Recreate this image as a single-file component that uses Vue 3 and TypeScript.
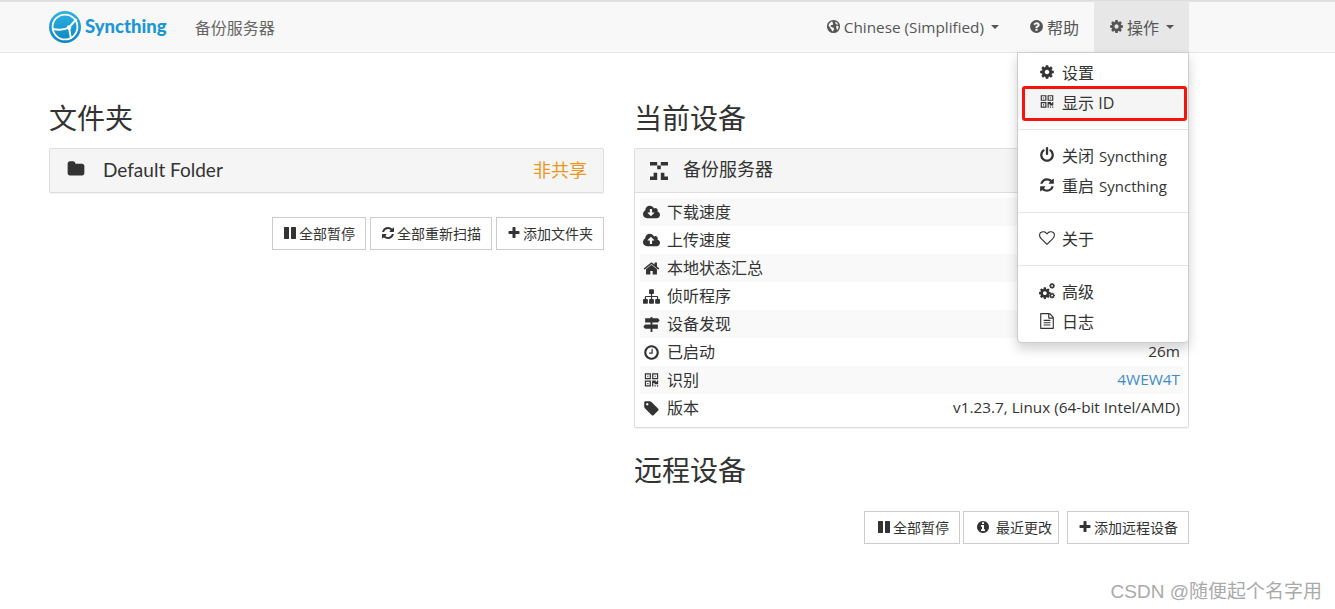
<template>
  <div class="page">
    <nav class="navbar">
      <div class="brand">
        <svg class="logo" viewBox="0 0 32 32">
          <defs>
            <linearGradient id="logoGrad" x1="0" y1="0" x2="0" y2="1">
              <stop offset="0" stop-color="#2eb3e0" />
              <stop offset="1" stop-color="#0d85c4" />
            </linearGradient>
          </defs>
          <circle cx="16" cy="16" r="16" fill="url(#logoGrad)" />
          <circle cx="16" cy="16" r="12.4" fill="none" stroke="#fff" stroke-width="1.8" />
          <path d="M4 18 Q13 20 20 16.500 L27.500 8 M20 16.500 L22 28" fill="none" stroke="#fff" stroke-width="1.9" />
          <circle cx="20" cy="16.500" r="2.300" fill="#fff" />
        </svg>
        <span class="brand-name">Syncthing</span>
      </div>
      <span class="device-name">备份服务器</span>
      <div class="nav-right">
        <a class="nav-item">
          <svg class="fa" viewBox="0 0 16 16"><path :d="globe" fill-rule="evenodd" /></svg>
          <span class="latin">Chinese (Simplified)</span>
          <i class="caret"></i>
        </a>
        <a class="nav-item">
          <svg class="fa" viewBox="0 0 1792 1792"><path :d="icons.help" /></svg>
          帮助
        </a>
        <a class="nav-item open">
          <svg class="fa" viewBox="0 0 1792 1792"><path :d="icons.cog" /></svg>
          操作
          <i class="caret"></i>
        </a>
      </div>
    </nav>

    <main class="columns">
      <section class="col">
        <h1>文件夹</h1>
        <div class="panel folder">
          <svg class="fa folder-icon" viewBox="0 0 1792 1792"><path :d="icons.folder" /></svg>
          <span class="folder-name">Default Folder</span>
          <span class="unshared">非共享</span>
        </div>
        <div class="actions first">
          <button v-for="b in folderButtons" :key="b.label" class="btn">
            <svg class="fa" viewBox="0 0 1792 1792"><path :d="b.icon" /></svg>{{ b.label }}
          </button>
        </div>
      </section>

      <section class="col">
        <h1>当前设备</h1>
        <div class="panel device">
          <div class="device-head">
            <svg class="identicon" viewBox="0 0 5 5">
              <path d="M0 0h2v1H0zM3 0h2v1H3zM2 1h1v1H2zM1 3h1v1H1zM3 3h1v1H3zM0 4h2v1H0zM3 4h2v1H3z" />
            </svg>
            <span class="device-title">备份服务器</span>
          </div>
          <div class="device-body">
            <div v-for="row in deviceRows" :key="row.label" class="row">
              <svg class="fa row-icon" :viewBox="row.box ?? '0 0 1792 1792'"><path :d="row.icon" /></svg>
              <span class="row-label">{{ row.label }}</span>
              <span class="row-value" :class="{ link: row.link }">{{ row.value }}</span>
            </div>
          </div>
        </div>
        <h1 class="remote">远程设备</h1>
        <div class="actions">
          <button class="btn pause-all">
            <svg class="fa" viewBox="0 0 1792 1792"><path :d="icons.pause" /></svg>全部暂停
          </button>
          <button class="btn recent">
            <svg class="fa" viewBox="0 0 1792 1792"><path :d="icons.info" /></svg>最近更改
          </button>
          <button class="btn">
            <svg class="fa" viewBox="0 0 1792 1792"><path :d="icons.plus" /></svg>添加远程设备
          </button>
        </div>
      </section>
    </main>

    <ul class="menu">
      <template v-for="(group, i) in menuGroups" :key="i">
        <li v-if="i > 0" class="divider"></li>
        <li v-for="item in group" :key="item.label" class="menu-item" :class="{ hover: item.hover }">
          <svg class="fa menu-icon" viewBox="0 0 1792 1792">
            <template v-if="item.cogs">
              <path :d="icons.cog" transform="translate(-109 378) scale(.85)" />
              <path :d="icons.cog" transform="translate(1090 -54) scale(.42)" />
              <path :d="icons.cog" transform="translate(1090 1030) scale(.42)" />
            </template>
            <path v-else :d="item.icon" />
          </svg>
          <span>{{ item.label }}<span v-if="item.latin" class="menu-latin">{{ item.latin }}</span></span>
        </li>
      </template>
    </ul>
    <div class="highlight"></div>

    <div class="watermark">CSDN @随便起个名字用</div>
  </div>
</template>

<script setup lang="ts">
const icons = {
  cog: 'M1152 896q0-106-75-181t-181-75-181 75-75 181 75 181 181 75 181-75 75-181zm512-109v222q0 12-8 23t-20 13l-185 28q-19 54-39 91 35 50 107 138 10 12 10 25t-9 23q-27 37-99 108t-94 71q-12 0-26-9l-138-108q-44 23-91 38-16 136-29 186-7 28-36 28h-222q-14 0-24.500-8.500t-11.500-21.500l-28-184q-49-16-90-37l-141 107q-10 9-25 9-14 0-25-11-126-114-165-168-7-10-7-23 0-12 8-23 15-21 51-66.500t54-70.500q-27-50-41-99l-183-27q-13-2-21-12.500t-8-23.500v-222q0-12 8-23t19-13l186-28q14-46 39-92-40-57-107-138-10-12-10-24 0-10 9-23 26-36 98.500-107.500t94.500-71.500q13 0 26 10l138 107q44-23 91-38 16-136 29-186 7-28 36-28h222q14 0 24.500 8.500t11.500 21.500l28 184q49 16 90 37l142-107q9-9 24-9 13 0 25 10 129 119 165 170 7 8 7 22 0 12-8 23-15 21-51 66.500t-54 70.500q26 50 41 98l183 28q13 2 21 12.500t8 23.500z',
  refresh: 'M1639 1056q0 5-1 7-64 268-268 434.500t-478 166.500q-146 0-282.500-55t-243.500-157l-129 129q-19 19-45 19t-45-19-19-45v-448q0-26 19-45t45-19h448q26 0 45 19t19 45-19 45l-137 137q71 66 161 102t187 36q134 0 250-65t186-179q11-17 53-117 8-23 30-23h192q13 0 22.500 9.500t9.500 22.500zm25-800v448q0 26-19 45t-45 19h-448q-26 0-45-19t-19-45 19-45l138-138q-148-137-349-137-134 0-250 65t-186 179q-11 17-53 117-8 23-30 23h-199q-13 0-22.500-9.500t-9.500-22.500v-7q65-268 270-434.500t480-166.500q146 0 284 55.500t245 156.500l130-129q19-19 45-19t45 19 19 45z',
  plus: 'M1600 736v192q0 40-28 68t-68 28h-416v416q0 40-28 68t-68 28h-192q-40 0-68-28t-28-68v-416h-416q-40 0-68-28t-28-68v-192q0-40 28-68t68-28h416v-416q0-40 28-68t68-28h192q40 0 68 28t28 68v416h416q40 0 68 28t28 68z',
  pause: 'M1664 192v1408q0 26-19 45t-45 19h-512q-26 0-45-19t-19-45v-1408q0-26 19-45t45-19h512q26 0 45 19t19 45zm-896 0v1408q0 26-19 45t-45 19h-512q-26 0-45-19t-19-45v-1408q0-26 19-45t45-19h512q26 0 45 19t19 45z',
  folder: 'M1728 608v704q0 92-66 158t-158 66h-1216q-92 0-158-66t-66-158v-960q0-92 66-158t158-66h320q92 0 158 66t66 158v32h672q92 0 158 66t66 158z',
  info: 'M1152 1376v-160q0-14-9-23t-23-9h-96v-512q0-14-9-23t-23-9h-320q-14 0-23 9t-9 23v160q0 14 9 23t23 9h96v320h-96q-14 0-23 9t-9 23v160q0 14 9 23t23 9h448q14 0 23-9t9-23zm-128-896v-160q0-14-9-23t-23-9h-192q-14 0-23 9t-9 23v160q0 14 9 23t23 9h192q14 0 23-9t9-23zm640 416q0 209-103 385.500t-279.500 279.500-385.500 103-385.500-103-279.500-279.500-103-385.500 103-385.500 279.500-279.500 385.500-103 385.500 103 279.500 279.500 103 385.500z',
  help: 'M1024 1376v-192q0-14-9-23t-23-9h-192q-14 0-23 9t-9 23v192q0 14 9 23t23 9h192q14 0 23-9t9-23zm256-672q0-88-55.500-163t-138.500-116-170-41q-243 0-371 213-15 24 8 42l132 100q7 6 19 6 16 0 25-12 53-68 86-92 34-24 86-24 48 0 85.500 26t37.500 59q0 38-20 61t-68 45q-63 28-115.500 86.500t-52.500 125.500v36q0 14 9 23t23 9h192q14 0 23-9t9-23q0-19 21.500-49.500t54.500-49.500q32-18 49-28.500t46-35 44.500-48 28-60.500 12.500-81zm384 192q0 209-103 385.500t-279.500 279.500-385.500 103-385.500-103-279.500-279.500-103-385.500 103-385.500 279.500-279.500 385.500-103 385.500 103 279.500 279.500 103 385.500z',
  power: 'M1664 896q0 156-61 298t-164 245-245 164-298 61-298-61-245-164-164-245-61-298q0-182 80.500-343t226.500-270q43-32 95.500-25t83.500 50q32 42 24.500 94.500t-49.500 84.500q-98 74-151.500 181t-53.500 228q0 104 40.500 198.500t109.500 163.500 163.500 109.500 198.500 40.500 198.500-40.500 163.500-109.500 109.500-163.500 40.500-198.500q0-121-53.500-228t-151.500-181q-42-32-49.500-84.500t24.500-94.500q31-43 84-50t95 25q146 109 226.500 270t80.500 343zm-640-768v640q0 52-38 90t-90 38-90-38-38-90v-640q0-52 38-90t90-38 90 38 38 90z',
  heart: 'M1664 596q0-81-21.500-143t-55-98.500-81.500-59.500-94-31-98-8-112 25.500-110.500 64-86.500 72-60 61.500q-18 22-49 22t-49-22q-24-28-60-61.500t-86.500-72-110.500-64-112-25.500-98 8-94 31-81.500 59.500-55 98.500-21.500 143q0 168 187 355l581 560 580-559q188-188 188-356zm128 0q0 221-229 450l-623 600q-18 18-44 18t-44-18l-624-602q-10-8-27.500-26t-55.500-65.500-68-97.500-53.500-121-23.500-138q0-220 127-344t351-124q62 0 126.500 21.500t120 58 95.500 68.500 76 68q36-36 76-68t95.500-68.500 120-58 126.500-21.500q224 0 351 124t127 344z',
  home: 'M1472 992v480q0 26-19 45t-45 19h-384v-384h-256v384h-384q-26 0-45-19t-19-45v-480q0-1 .5-3t.5-3l575-474 575 474q1 2 1 6zm223-69l-62 74q-8 9-21 11h-3q-13 0-21-7l-692-577-692 577q-12 8-24 7-13-2-21-11l-62-74q-8-10-7-23.500t11-21.500l719-599q32-26 76-26t76 26l244 204v-195q0-14 9-23t23-9h192q14 0 23 9t9 23v408l219 182q10 8 11 21.500t-7 23.500z',
  cloudDown: 'M1280 928q0-14-9-23t-23-9h-224v-352q0-13-9.500-22.500t-22.500-9.500h-192q-13 0-22.500 9.500t-9.500 22.500v352h-224q-13 0-22.500 9.500t-9.500 22.500q0 14 9 23l352 352q9 9 23 9t23-9l351-351q10-12 10-24zm640 224q0 159-112.500 271.500t-271.500 112.500h-1088q-185 0-316.500-131.500t-131.500-316.500q0-130 70-240t188-165q-2-30-2-43 0-212 150-362t362-150q156 0 285.500 87t188.500 231q71-62 166-62 106 0 181 75t75 181q0 76-41 138 130 31 213.500 135.500t83.500 238.500z',
  cloudUp: 'M1280 864q0-14-9-23l-352-352q-9-9-23-9t-23 9l-351 351q-10 12-10 24 0 14 9 23t23 9h224v352q0 13 9.500 22.500t22.500 9.500h192q13 0 22.500-9.500t9.500-22.500v-352h224q13 0 22.500-9.500t9.500-22.500zm640 288q0 159-112.500 271.500t-271.500 112.500h-1088q-185 0-316.500-131.500t-131.500-316.500q0-130 70-240t188-165q-2-30-2-43 0-212 150-362t362-150q156 0 285.500 87t188.500 231q71-62 166-62 106 0 181 75t75 181q0 76-41 138 130 31 213.500 135.500t83.500 238.500z',
  sitemap: 'M1792 1248v320q0 40-28 68t-68 28h-320q-40 0-68-28t-28-68v-320q0-40 28-68t68-28h96v-192h-512v192h96q40 0 68 28t28 68v320q0 40-28 68t-68 28h-320q-40 0-68-28t-28-68v-320q0-40 28-68t68-28h96v-192h-512v192h96q40 0 68 28t28 68v320q0 40-28 68t-68 28h-320q-40 0-68-28t-28-68v-320q0-40 28-68t68-28h96v-192q0-52 38-90t90-38h512v-192h-96q-40 0-68-28t-28-68v-320q0-40 28-68t68-28h320q40 0 68 28t28 68v320q0 40-28 68t-68 28h-96v192h512q52 0 90 38t38 90v192h96q40 0 68 28t28 68z',
  signs: 'M800 96h192v128h576l192 224-192 224h-1344v-448h576zM800 600h192v296h576v448h-576v352h-192v-352h-576l-192-224 192-224h576z',
  clock: 'M1024 544v448q0 14-9 23t-23 9h-320q-14 0-23-9t-9-23v-64q0-14 9-23t23-9h224v-352q0-14 9-23t23-9h64q14 0 23 9t9 23zm416 352q0-148-73-273t-198-198-273-73-273 73-198 198-73 273 73 273 198 198 273 73 273-73 198-198 73-273zm224 0q0 209-103 385.500t-279.500 279.500-385.500 103-385.500-103-279.500-279.500-103-385.500 103-385.500 279.500-279.500 385.500-103 385.500 103 279.500 279.500 103 385.500z',
  qrcode: 'M576 1152v128h-128v-128h128zm0-768v128h-128v-128h128zm768 0v128h-128v-128h128zm-1024 1023h384v-383h-384v383zm0-767h384v-384h-384v384zm768 0h384v-384h-384v384zm-256 256v640h-640v-640h640zm512 512v128h-128v-128h128zm256 0v128h-128v-128h128zm0-512v384h-384v-128h-128v384h-128v-640h384v128h128v-128h128zm-768-768v640h-640v-640h640zm768 0v640h-640v-640h640z',
  tag: 'M576 448q0-53-37.500-90.500t-90.500-37.500-90.500 37.500-37.500 90.500 37.500 90.500 90.500 37.500 90.500-37.500 37.500-90.500zm1067 576q0 53-37 90l-491 492q-39 37-91 37-53 0-90-37l-715-716q-38-37-64.500-101t-26.500-117v-416q0-52 38-90t90-38h416q53 0 117 26.500t102 64.500l715 714q37 39 37 91z',
  file: 'M1596 380q28 28 48 76t20 88v1152q0 40-28 68t-68 28h-1344q-40 0-68-28t-28-68v-1600q0-40 28-68t68-28h896q40 0 88 20t76 48zm-444-244v376h376q-10-29-22-41l-313-313q-12-12-41-22zm384 1528v-1024h-416q-40 0-68-28t-28-68v-416h-768v1536h1280zm-1024-864q0-14 9-23t23-9h704q14 0 23 9t9 23v64q0 14-9 23t-23 9h-704q-14 0-23-9t-9-23v-64zm736 224q14 0 23 9t9 23v64q0 14-9 23t-23 9h-704q-14 0-23-9t-9-23v-64q0-14 9-23t23-9h704zm0 256q14 0 23 9t9 23v64q0 14-9 23t-23 9h-704q-14 0-23-9t-9-23v-64q0-14 9-23t23-9h704z',
}

const globe =
  'M8 1a7 7 0 1 0 0 14A7 7 0 0 0 8 1zM6.200 2.600 7.400 3.300 6.800 4.300 7.900 5 7 6.300 5.500 6.500 4.800 7.900 6.300 8.900 8 9.200 8.700 10.500 7.800 12.500 6.700 13.300 5.900 11.500 4.800 10.100 3.700 8.300 2.700 7.300C3 5 4.300 3.300 6.200 2.600zM10.200 3 11.900 4 13 5.800 11.700 6 10.800 5.200 9.800 4.300zM10.800 7.300 13.300 7.400C13.600 9 13.200 10.400 12.200 11.700L11.200 10.300z'

interface DeviceRow {
  icon: string
  label: string
  value: string
  box?: string
  link?: boolean
}

const deviceRows: DeviceRow[] = [
  { icon: icons.cloudDown, box: '0 0 1920 1792', label: '下载速度', value: '0 B/s (0 B)' },
  { icon: icons.cloudUp, box: '0 0 1920 1792', label: '上传速度', value: '0 B/s (0 B)' },
  { icon: icons.home, label: '本地状态汇总', value: '0 0 0 B' },
  { icon: icons.sitemap, label: '侦听程序', value: '3/3' },
  { icon: icons.signs, label: '设备发现', value: '3/5' },
  { icon: icons.clock, label: '已启动', value: '26m' },
  { icon: icons.qrcode, label: '识别', value: '4WEW4T', link: true },
  { icon: icons.tag, label: '版本', value: 'v1.23.7, Linux (64-bit Intel/AMD)' },
]

const folderButtons = [
  { icon: icons.pause, label: '全部暂停' },
  { icon: icons.refresh, label: '全部重新扫描' },
  { icon: icons.plus, label: '添加文件夹' },
]

interface MenuItem {
  icon?: string
  label: string
  latin?: string
  hover?: boolean
  cogs?: boolean
}

const menuGroups: MenuItem[][] = [
  [
    { icon: icons.cog, label: '设置' },
    { icon: icons.qrcode, label: '显示 ID', hover: true },
  ],
  [
    { icon: icons.power, label: '关闭', latin: 'Syncthing' },
    { icon: icons.refresh, label: '重启', latin: 'Syncthing' },
  ],
  [{ icon: icons.heart, label: '关于' }],
  [
    { cogs: true, label: '高级' },
    { icon: icons.file, label: '日志' },
  ],
]
</script>

<style>
html,
body {
  margin: 0;
  background: #fff;
}
</style>

<style scoped>
.page {
  position: relative;
  height: 609px;
  overflow: hidden;
  font-family: 'Open Sans', 'Noto Sans CJK SC', sans-serif;
  font-size: 16px;
  color: #333;
}

.fa {
  width: 15px;
  height: 15px;
  fill: currentColor;
  flex: none;
}

.navbar {
  display: flex;
  align-items: center;
  height: 51px;
  padding-left: 49px;
  background: #f8f8f8;
  border-top: 1px solid #ddd;
  border-bottom: 1px solid #e7e7e7;
  box-shadow: inset 0 1px 0 #e4e4e4;
  color: #555;
}

.brand {
  display: flex;
  align-items: center;
  gap: 4px;
}

.logo {
  width: 32px;
  height: 32px;
}

.brand-name {
  margin-bottom: 2px;
  font-family: Lato, sans-serif;
  font-weight: 900;
  font-size: 18.500px;
  color: #1c96d4;
}

.device-name {
  margin-left: 28px;
  color: #666;
}

.nav-right {
  display: flex;
  height: 100%;
  margin-left: auto;
  margin-right: 146px;
}

.nav-item {
  display: flex;
  align-items: center;
  gap: 3px;
  padding: 0 15px;
}

.nav-item.open {
  background: #e7e7e7;
}

.latin {
  font-size: 15.300px;
}

.caret {
  width: 0;
  height: 0;
  margin-left: 4px;
  border-top: 4px solid #555;
  border-left: 4px solid transparent;
  border-right: 4px solid transparent;
}

.columns {
  display: flex;
  gap: 30px;
  width: 1140px;
  margin-left: 49px;
}

.col {
  flex: 1;
  min-width: 0;
}

h1 {
  margin: 45px 0 0;
  font-size: 28px;
  line-height: 40px;
  height: 50px;
  font-weight: 400;
  color: #333;
}

.panel {
  box-sizing: border-box;
  border: 1px solid #ddd;
  border-radius: 2px;
  box-shadow: 0 1px 1px rgba(0, 0, 0, 0.05);
}

.folder {
  display: flex;
  align-items: center;
  height: 45px;
  padding: 0 16px 3px 17px;
  background: #f5f5f5;
  font-size: 18px;
}

.folder-icon {
  width: 18px;
  height: 18px;
}

.folder-name {
  margin-left: 18px;
  font-family: Lato, sans-serif;
  font-size: 19px;
}

.unshared {
  margin-left: auto;
  color: #ec971f;
}

.actions {
  display: flex;
  justify-content: flex-end;
  gap: 4px;
}

.actions.first {
  margin-top: 24px;
}

.btn {
  display: flex;
  align-items: center;
  box-sizing: border-box;
  height: 33px;
  padding: 0 10px 2px;
  gap: 2px;
  background: #fff;
  border: 1px solid #ccc;
  font-family: inherit;
  font-size: 14px;
  color: #333;
}

.btn .fa {
  width: 14px;
  height: 14px;
}

.btn.pause-all {
  padding-left: 12px;
}

.btn.recent {
  gap: 6px;
  margin: 0 4px 0 -1px;
  padding: 0 6px 2px 12px;
}

.device-head {
  display: flex;
  align-items: center;
  height: 43px;
  padding-left: 15px;
  background: #f5f5f5;
  border-bottom: 1px solid #ddd;
  font-size: 18px;
}

.identicon {
  width: 18px;
  height: 18px;
  fill: #333;
}

.device-title {
  margin: 0 0 5px 15px;
}

.device-body {
  padding: 5px;
}

.row {
  display: flex;
  align-items: center;
  height: 28px;
  padding: 0 3px;
  color: #333;
}

.row:nth-child(odd) {
  background: #f9f9f9;
}

.row-icon {
  width: 17px;
  height: 17px;
}

.row-label {
  margin: 0 0 2px 7px;
}

.row-value {
  margin: 0 0 2px auto;
  font-size: 15.300px;
}

.row-value.link {
  color: #428bca;
}

.remote {
  margin-top: 22px;
  height: 61px;
}

.menu {
  position: absolute;
  top: 52px;
  left: 1017px;
  box-sizing: border-box;
  width: 172px;
  height: 291px;
  margin: 0;
  padding: 5px 0;
  list-style: none;
  background: #fff;
  border: 1px solid #ccc;
  border-radius: 0 0 4px 4px;
  box-shadow: 0 6px 12px rgba(0, 0, 0, 0.175);
}

.menu-item {
  display: flex;
  align-items: center;
  box-sizing: border-box;
  height: 30px;
  padding: 0 0 2px 21px;
  gap: 7px;
}

.menu-item.hover {
  background: #f5f5f5;
}

.menu-icon {
  width: 16px;
  height: 16px;
}

.menu-latin {
  margin-left: 5px;
  font-size: 15px;
}

.divider {
  height: 1px;
  margin: 11px 0;
  background: #e5e5e5;
}

.highlight {
  position: absolute;
  top: 86px;
  left: 1022px;
  box-sizing: border-box;
  width: 165px;
  height: 35px;
  border: 3px solid #f5130b;
  border-radius: 3px;
}

.watermark {
  position: absolute;
  right: 13px;
  bottom: 6px;
  font-family: 'Liberation Sans', 'Noto Sans CJK SC', sans-serif;
  font-size: 19px;
  color: #aaa;
}
</style>
